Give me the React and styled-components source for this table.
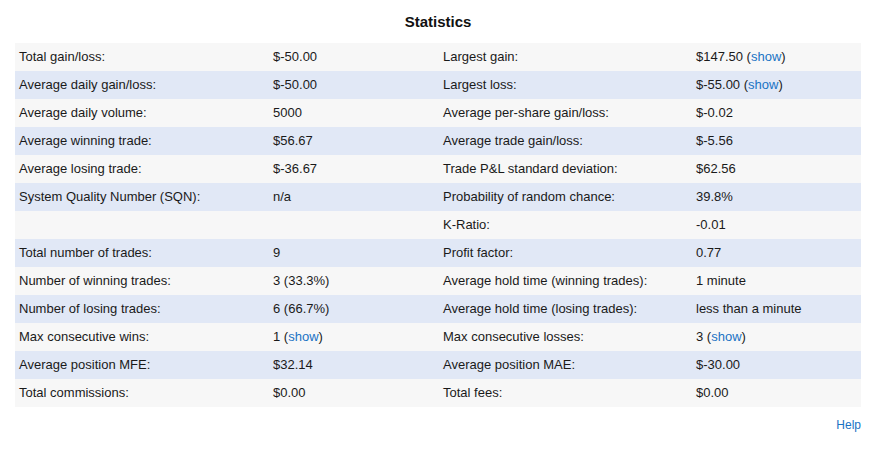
import React from "react";
import styled, { createGlobalStyle } from "styled-components";

const Global = createGlobalStyle`
  body { margin: 0; background: #fff; font-family: "Liberation Sans", Arial, sans-serif; color: #222; }
`;

const Page = styled.div`
  padding: 0 25px 0 15px;
  width: 846px;
`;

const Title = styled.h2`
  margin: 0;
  padding-top: 13px;
  height: 43px;
  line-height: 18px;
  box-sizing: border-box;
  text-align: center;
  font-size: 15px;
  font-weight: bold;
  color: #111;
`;

const Table = styled.div`
  display: grid;
  grid-template-columns: 254px 170px 253px 169px;
`;

const Row = styled.div`
  display: contents;
  & > div { background: ${(p) => (p.$alt ? "#e1e8f6" : "#f7f7f7")}; }
`;

const Cell = styled.div`
  height: 28px;
  line-height: 28px;
  padding-left: 4px;
  font-size: 13px;
  color: #1a1a1a;
  white-space: nowrap;
`;

const Link = styled.a`
  color: #1a73c4;
  text-decoration: none;
`;

const Footer = styled.div`
  display: flex;
  justify-content: flex-end;
  padding-top: 11px;
`;

const HelpLink = styled.a`
  color: #1a73c4;
  font-size: 12px;
  text-decoration: none;
`;

const show = (v) => (
  <>
    {v} (<Link href="#">show</Link>)
  </>
);

const rows = [
  ["Total gain/loss:", "$-50.00", "Largest gain:", show("$147.50")],
  ["Average daily gain/loss:", "$-50.00", "Largest loss:", show("$-55.00")],
  ["Average daily volume:", "5000", "Average per-share gain/loss:", "$-0.02"],
  ["Average winning trade:", "$56.67", "Average trade gain/loss:", "$-5.56"],
  ["Average losing trade:", "$-36.67", "Trade P&L standard deviation:", "$62.56"],
  ["System Quality Number (SQN):", "n/a", "Probability of random chance:", "39.8%"],
  ["", "", "K-Ratio:", "-0.01"],
  ["Total number of trades:", "9", "Profit factor:", "0.77"],
  ["Number of winning trades:", "3 (33.3%)", "Average hold time (winning trades):", "1 minute"],
  ["Number of losing trades:", "6 (66.7%)", "Average hold time (losing trades):", "less than a minute"],
  ["Max consecutive wins:", show("1"), "Max consecutive losses:", show("3")],
  ["Average position MFE:", "$32.14", "Average position MAE:", "$-30.00"],
  ["Total commissions:", "$0.00", "Total fees:", "$0.00"],
];

export default function App() {
  return (
    <>
      <Global />
      <Page>
        <Title>Statistics</Title>
        <Table>
          {rows.map((r, i) => (
            <Row key={i} $alt={i % 2 === 1}>
              {r.map((c, j) => (
                <Cell key={j}>{c}</Cell>
              ))}
            </Row>
          ))}
        </Table>
        <Footer>
          <HelpLink href="#">Help</HelpLink>
        </Footer>
      </Page>
    </>
  );
}
